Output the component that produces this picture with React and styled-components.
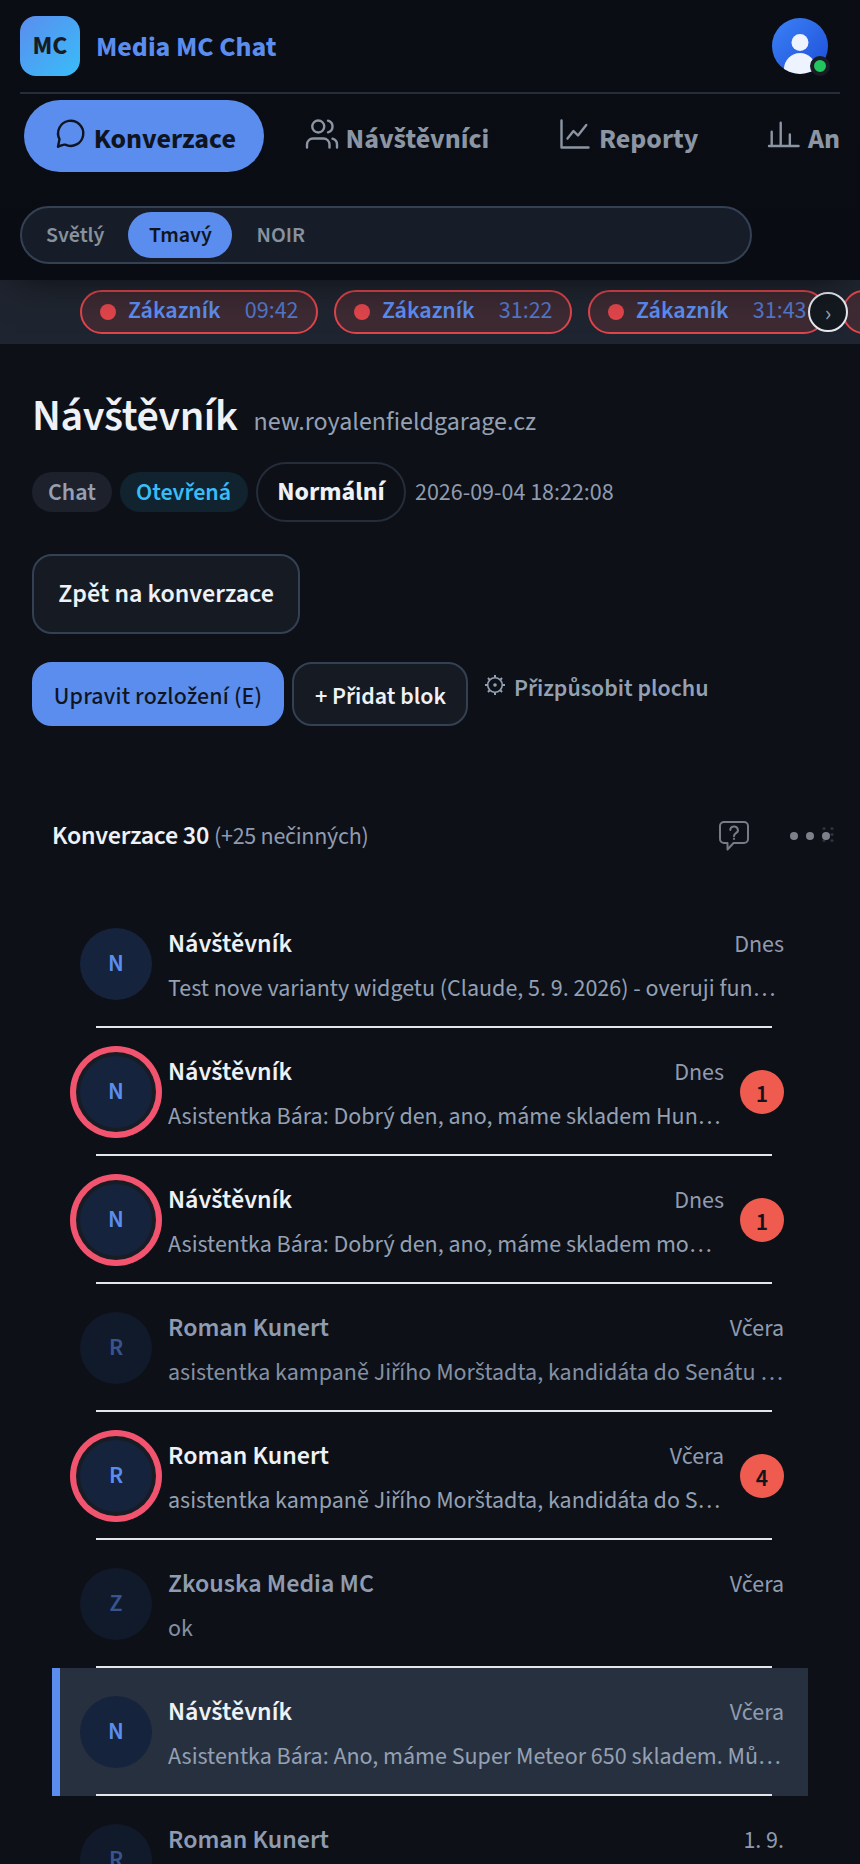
import React from 'react'
import styled, { createGlobalStyle } from 'styled-components'

const GlobalStyle = createGlobalStyle`
  * {
    box-sizing: border-box;
  }
  body {
    margin: 0;
    background: #0d1017;
    color: #eef1f6;
    font-family: "Source Sans 3", "Noto Sans CJK JP", "Open Sans", sans-serif;
    font-size: 24px;
  }
  button {
    font: inherit;
    color: inherit;
    margin: 0;
    padding: 0;
    border: none;
    background: none;
    cursor: pointer;
    white-space: nowrap;
  }
`
const Page = styled.div`
  height: 1864px;
  overflow: hidden;
`

/* ---- header ---- */
const Header = styled.header`
  position: relative;
  z-index: 2;
  height: 280px;
  padding: 0 20px;
  background: linear-gradient(#0a0d14, #090c13);
  box-shadow: 0 16px 36px -16px rgba(0, 0, 0, 0.6);
`
const TopBar = styled.div`
  display: flex;
  align-items: center;
  height: 94px;
  padding-right: 12px;
  border-bottom: 2px solid #252d3a;
`
const Logo = styled.div`
  display: flex;
  align-items: center;
  justify-content: center;
  width: 60px;
  height: 60px;
  border-radius: 16px;
  background: linear-gradient(135deg, #5b8def, #38bdf8);
  color: #171b24;
  font-weight: 700;
  font-size: 26px;
  line-height: 60px;
`
const Brand = styled.div`
  flex: 1;
  margin-left: 16px;
  color: #5b8def;
  font-weight: 700;
  font-size: 28px;
  line-height: 40px;
  padding-top: 2px;
`
const Profile = styled.div`
  position: relative;
  width: 56px;
  height: 56px;
`
const Status = styled.span`
  position: absolute;
  right: -2px;
  bottom: -2px;
  width: 20px;
  height: 20px;
  border: 4px solid #171c25;
  border-radius: 50%;
  background: #22c55e;
`
const Tabs = styled.nav`
  display: flex;
  gap: 12px;
  height: 112px;
  padding: 6px 0 0 4px;
  overflow: hidden;
`
const Tab = styled.button`
  display: flex;
  flex: none;
  align-items: center;
  gap: 5.7px;
  height: 72px;
  padding: 0 28px;
  border-radius: 36px;
  font-weight: 700;
  font-size: 28px;
  line-height: 40px;
  background: ${p => p.$active ? '#5b8def' : 'transparent'};
  color: ${p => p.$active ? '#0f1520' : '#8b95a3'};

  svg {
    margin-top: -4px;
  }
  span {
    padding-top: 6px;
  }
`
const Themes = styled.div`
  display: flex;
  align-items: center;
  gap: 4px;
  width: 732px;
  height: 58px;
  padding: 0 4px;
  border: 2px solid #344054;
  border-radius: 29px;
  background: #171d28;
`
const Theme = styled.button`
  min-width: ${p => p.$active ? 104 : 0}px;
  height: 46px;
  padding: 0 20px;
  border-radius: 23px;
  font-weight: 600;
  font-size: 22px;
  line-height: 46px;
  background: ${p => p.$active ? '#5b8def' : 'transparent'};
  color: ${p => p.$active ? '#0f1520' : '#87929f'};
`

/* ---- live customers ---- */
const Strip = styled.div`
  position: relative;
  height: 64px;
  background: #1f2530;
`
const Chips = styled.div`
  display: flex;
  gap: 16px;
  padding: 10px 0 10px 80px;
  overflow: hidden;
`
const Chip = styled.div`
  display: flex;
  flex: none;
  align-items: center;
  width: 238px;
  height: 44px;
  padding: 0 17.5px 0 18px;
  border: 2px solid #e0454b;
  border-radius: 22px;
  background: #3d2a33;
  line-height: 36px;
`
const Dot = styled.span`
  width: 16px;
  height: 16px;
  margin-right: 12px;
  border-radius: 50%;
  background: #e0454b;
`
const ChipName = styled.span`
  flex: 1;
  margin-top: -3px;
  color: #5b8def;
  font-weight: 600;
`
const ChipTime = styled.span`
  margin-top: -3px;
  color: #5077c9;
`
const Next = styled.button`
  position: absolute;
  top: 12px;
  right: 12px;
  width: 40px;
  height: 40px;
  padding-top: 4px;
  border: 2px solid #e6e9ee;
  border-radius: 50%;
  background: #141920;
  color: #99a3b3;
  line-height: 30px;
`

/* ---- conversation head ---- */
const Head = styled.section`
  padding: 45px 32px 0;
`
const TitleRow = styled.div`
  display: flex;
  align-items: baseline;
  gap: 16px;
  height: 73px;
  line-height: 56px;
`
const Title = styled.h1`
  margin: 0;
  font-size: 44px;
  font-weight: 600;
  letter-spacing: -0.01em;
`
const Site = styled.span`
  color: #94a0b3;
  font-size: 26px;
`
const Meta = styled.div`
  display: flex;
  align-items: center;
  gap: 8px;
  height: 60px;
`
const Badge = styled.span`
  min-width: ${p => p.$open ? 128 : 80}px;
  height: 40px;
  padding: 1px 16px 0;
  border-radius: 20px;
  font-weight: 600;
  line-height: 39px;
  background: ${p => p.$open ? '#10232f' : '#1c212c'};
  color: ${p => p.$open ? '#38bdf8' : '#94a0b3'};
`
const Priority = styled.button`
  width: 150px;
  height: 60px;
  border: 2px solid #252d3a;
  border-radius: 30px;
  font-weight: 700;
  font-size: 26px;
  line-height: 56px;
`
const Created = styled.span`
  margin-left: 1px;
  color: #8f9bb0;
`
const Back = styled.button`
  display: block;
  width: 268px;
  height: 80px;
  margin-top: 32px;
  border: 2px solid #344054;
  border-radius: 20px;
  background: #161b23;
  font-weight: 600;
  font-size: 26px;
  line-height: 76px;
`
const Actions = styled.div`
  display: flex;
  gap: 8px;
  margin-top: 28px;
`
const Action = styled.button`
  width: ${p => p.$primary ? 252 : 176}px;
  height: 64px;
  padding: 5px 0 0 ${p => p.$primary ? 0 : 1}px;
  border: 2px solid ${p => p.$primary ? '#5b8def' : '#344054'};
  border-radius: 20px;
  background: ${p => p.$primary ? '#5b8def' : '#161b23'};
  color: ${p => p.$primary ? '#0f1520' : '#eef1f6'};
  font-weight: ${p => p.$primary ? 500 : 600};
  letter-spacing: ${p => p.$primary ? '0.006em' : 'normal'};
`
const Customize = styled.button`
  display: flex;
  align-items: center;
  gap: 8px;
  height: 52px;
  margin-left: 8px;
  color: #94a0b3;
  font-weight: 600;

  svg {
    margin-top: -7px;
  }
`

/* ---- list ---- */
const List = styled.section`
  padding: 84px 0 0 52px;
`
const ListHead = styled.div`
  display: flex;
  align-items: center;
  height: 52px;
  margin-bottom: 38px;
`
const ListTitle = styled.h2`
  flex: 1;
  margin: 0;
  padding-bottom: 2px;
  font-size: 26px;
  font-weight: 600;
  letter-spacing: -0.01em;
  white-space: nowrap;
`
const Idle = styled.span`
  color: #8f9bb0;
  font-size: 24px;
  font-weight: 400;
`
const Row = styled.article`
  width: 756px;
  height: 128px;
  border-left: 8px solid ${p => p.$selected ? '#5b8def' : 'transparent'};
  background: ${p => p.$selected ? '#27303e' : 'transparent'};
  background-clip: padding-box;
`
const RowMain = styled.div`
  display: flex;
  align-items: flex-start;
  gap: 16px;
  height: 126px;
  padding: 24px 24px 0 20px;
`
const Divider = styled.div`
  height: 2px;
  margin: 0 36px;
  background: #e3e6ea;
`
const Avatar = styled.div`
  flex: none;
  width: 72px;
  height: 72px;
  margin-top: 4px;
  border-radius: 50%;
  background: #16233d;
  color: #5b8def;
  font-weight: 600;
  line-height: 72px;
  text-align: center;
  opacity: ${p => p.$muted ? 0.55 : 1};
  box-shadow: ${p => p.$ring ? '0 0 0 4px #171c25, 0 0 0 10px #f25470' : 'none'};
`
const Body = styled.div`
  flex: 1;
  min-width: 0;
`
const NameLine = styled.div`
  display: flex;
  align-items: baseline;
  justify-content: space-between;
  height: 46px;
  line-height: 40px;
  color: #8f9bb0;
`
const Name = styled.strong`
  color: ${p => p.$muted ? '#8f9bb0' : '#eef1f6'};
  font-size: 26px;
  font-weight: 600;
`
const Preview = styled.div`
  overflow: hidden;
  line-height: 37px;
  white-space: nowrap;
  text-overflow: ellipsis;
  color: ${p => p.$muted ? '#8490a4' : '#94a0b3'};
`
const Count = styled.span`
  flex: none;
  width: 44px;
  height: 44px;
  margin-top: 18px;
  padding-top: 5px;
  border-radius: 50%;
  background: #f05b50;
  color: #12151c;
  font-weight: 600;
  line-height: 39px;
  text-align: center;
`

const TabIcon = ({ children }) => (
    <svg width="36" height="36" viewBox="0 0 24 24" fill="none" stroke="currentColor" strokeWidth="1.6" strokeLinecap="round" strokeLinejoin="round">
        {children}
    </svg>
)

const tabs = [
    { label: 'Konverzace', icon: <path d="M4 20.5l1-5.1a8.4 8.4 0 1 1 3.8 3.7c-1-.3-2.3.5-4.8 1.4z" /> },
    { label: 'Návštěvníci', icon: <><path d="M17 21v-2a4 4 0 0 0-4-4H6a4 4 0 0 0-4 4v2" /><circle cx="9.5" cy="7" r="4" /><path d="M22 21v-2a4 4 0 0 0-3-3.87M16 3.13a4 4 0 0 1 0 7.75" /></> },
    { label: 'Reporty', icon: <path d="M3 3v18h18M7 15l4-5 3 3 5.5-7" /> },
    { label: 'An', icon: <path d="M2 20h19.7M3.8 20v-9.5M9.8 20V4.5M15.9 20v-7.7" /> },
]

const times = ['09:42', '31:22', '31:43', '31:58']

const rows = [
    { name: 'Návštěvník', time: 'Dnes', text: 'Test nove varianty widgetu (Claude, 5. 9. 2026) - overuji funkcnost' },
    { name: 'Návštěvník', time: 'Dnes', text: 'Asistentka Bára: Dobrý den, ano, máme skladem Hunter 350', count: 1 },
    { name: 'Návštěvník', time: 'Dnes', text: 'Asistentka Bára: Dobrý den, ano, máme skladem momentálně', count: 1 },
    { name: 'Roman Kunert', time: 'Včera', text: 'asistentka kampaně Jiřího Morštadta, kandidáta do Senátu Parlamentu', muted: true },
    { name: 'Roman Kunert', time: 'Včera', text: 'asistentka kampaně Jiřího Morštadta, kandidáta do Senátu', count: 4 },
    { name: 'Zkouska Media MC', time: 'Včera', text: 'ok', muted: true },
    { name: 'Návštěvník', time: 'Včera', text: 'Asistentka Bára: Ano, máme Super Meteor 650 skladem. Můžete', selected: true },
    { name: 'Roman Kunert', time: '1. 9.', text: '', muted: true },
]

const teeth = [0, 45, 90, 135, 180, 225, 270, 315]

const App = () => {
    return (
        <Page>
            <GlobalStyle />
            <Header>
                <TopBar>
                    <Logo>MC</Logo>
                    <Brand>Media MC Chat</Brand>
                    <Profile>
                        <svg width="56" height="56" viewBox="0 0 56 56">
                            <defs>
                                <linearGradient id="face" x1="0" y1="0" x2="1" y2="1">
                                    <stop offset="0" stopColor="#3b82f6" />
                                    <stop offset="1" stopColor="#1d4ed8" />
                                </linearGradient>
                                <clipPath id="round"><circle cx="28" cy="28" r="28" /></clipPath>
                            </defs>
                            <circle cx="28" cy="28" r="28" fill="url(#face)" />
                            <g fill="#edf3ff" clipPath="url(#round)">
                                <circle cx="28" cy="24.5" r="8.5" />
                                <path d="M12 56V51a16 16 0 0 1 32 0v5z" />
                            </g>
                        </svg>
                        <Status />
                    </Profile>
                </TopBar>
                <Tabs>
                    {tabs.map((tab, i) => (
                        <Tab key={tab.label} $active={i === 0}>
                            <TabIcon>{tab.icon}</TabIcon>
                            <span>{tab.label}</span>
                        </Tab>
                    ))}
                </Tabs>
                <Themes>
                    <Theme>Světlý</Theme>
                    <Theme $active>Tmavý</Theme>
                    <Theme>NOIR</Theme>
                </Themes>
            </Header>

            <Strip>
                <Chips>
                    {times.map(time => (
                        <Chip key={time}>
                            <Dot />
                            <ChipName>Zákazník</ChipName>
                            <ChipTime>{time}</ChipTime>
                        </Chip>
                    ))}
                </Chips>
                <Next>›</Next>
            </Strip>

            <Head>
                <TitleRow>
                    <Title>Návštěvník</Title>
                    <Site>new.royalenfieldgarage.cz</Site>
                </TitleRow>
                <Meta>
                    <Badge>Chat</Badge>
                    <Badge $open>Otevřená</Badge>
                    <Priority>Normální</Priority>
                    <Created>2026-09-04 18:22:08</Created>
                </Meta>
                <Back>Zpět na konverzace</Back>
                <Actions>
                    <Action $primary>Upravit rozložení (E)</Action>
                    <Action>+ Přidat blok</Action>
                    <Customize>
                        <svg width="22" height="22" viewBox="-11 -11 22 22" fill="none" stroke="currentColor" strokeWidth="1.6">
                            <circle r="7.3" />
                            <circle r="1.8" fill="currentColor" stroke="none" />
                            {teeth.map(a => <path key={a} d="M0-7.5V-10" transform={`rotate(${a})`} strokeWidth="2" />)}
                        </svg>
                        Přizpůsobit plochu
                    </Customize>
                </Actions>
            </Head>

            <List>
                <ListHead>
                    <ListTitle>Konverzace 30 <Idle>(+25 nečinných)</Idle></ListTitle>
                    <svg width="142" height="34" viewBox="0 0 142 34" fill="none">
                        <g stroke="#777b85" strokeWidth="2" strokeLinecap="round" strokeLinejoin="round">
                            <path d="M6 3h20a4 4 0 0 1 4 4v13a4 4 0 0 1-4 4H15.500l-6 6.500v-6.500H6a4 4 0 0 1-4-4V7a4 4 0 0 1 4-4z" />
                            <path d="M12.300 11a3.800 3.500 0 1 1 5.700 3c-1.400 1-2 1.600-2 3.200M16 19.700v.3" />
                        </g>
                        <g fill="#2c333f">
                            <circle cx="106" cy="9.5" r="1.6" />
                            <circle cx="114" cy="9.5" r="1.6" />
                            <circle cx="114" cy="15.5" r="1.6" />
                            <circle cx="106" cy="21.5" r="1.6" />
                            <circle cx="114" cy="21.5" r="1.6" />
                        </g>
                        <g fill="#7c808a">
                            <circle cx="76" cy="17" r="4" />
                            <circle cx="92" cy="17" r="4" />
                            <circle cx="108" cy="17" r="4" />
                        </g>
                    </svg>
                </ListHead>
                {rows.map((row, i) => (
                    <Row key={i} $selected={row.selected}>
                        <RowMain>
                            <Avatar $muted={row.muted} $ring={row.count}>{row.name[0]}</Avatar>
                            <Body>
                                <NameLine>
                                    <Name $muted={row.muted}>{row.name}</Name>
                                    <span>{row.time}</span>
                                </NameLine>
                                <Preview $muted={row.muted}>{row.text}</Preview>
                            </Body>
                            {row.count && <Count>{row.count}</Count>}
                        </RowMain>
                        <Divider />
                    </Row>
                ))}
            </List>
        </Page>
    )
}

export default App
